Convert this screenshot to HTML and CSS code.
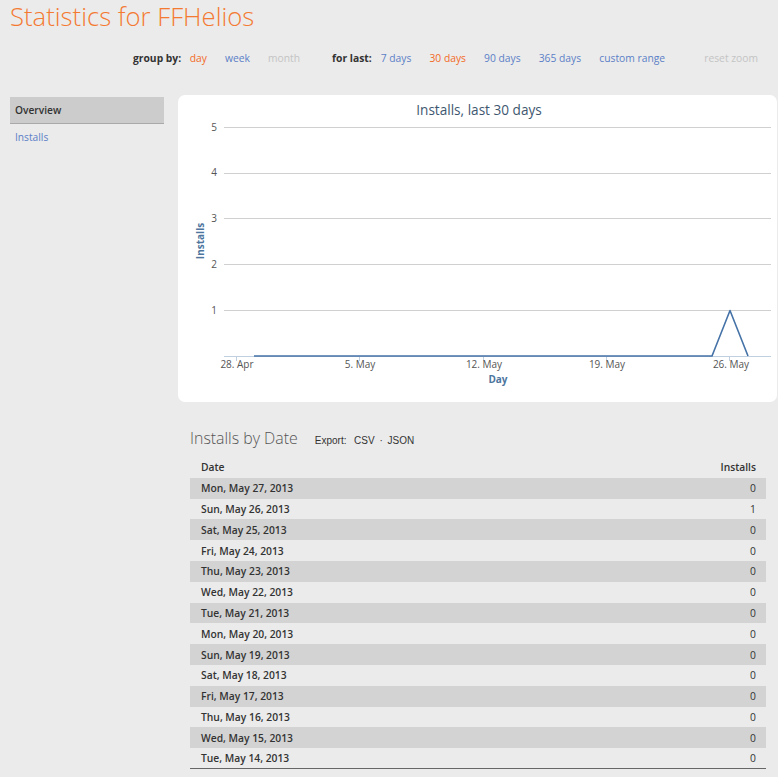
FILE: index.html
```html
<!DOCTYPE html>
<html>
<head>
<meta charset="utf-8">
<title>Statistics for FFHelios</title>
<link rel="stylesheet" href="styles.css">
</head>
<body>
<h1 class="page-title">Statistics for FFHelios</h1>
<div class="controls">
  <span class="label">group by:</span>
  <a class="opt active">day</a>
  <a class="opt">week</a>
  <a class="opt disabled">month</a>
  <span class="label second">for last:</span>
  <a class="opt">7 days</a>
  <a class="opt active">30 days</a>
  <a class="opt">90 days</a>
  <a class="opt">365 days</a>
  <a class="opt">custom range</a>
  <a class="opt disabled reset">reset zoom</a>
</div>
<div class="layout">
  <aside class="sidebar">
    <div class="side-head">Overview</div>
    <a class="side-link">Installs</a>
  </aside>
  <main class="main">
    <div class="card">
      <svg class="chart" width="599" height="307" viewBox="0 0 599 307">
        <text class="c-title" x="301" y="20" text-anchor="middle">Installs, last 30 days</text>
        <g class="grid">
          <line x1="46" x2="593" y1="32.5" y2="32.5"/>
          <line x1="46" x2="593" y1="78.5" y2="78.5"/>
          <line x1="46" x2="593" y1="123.5" y2="123.5"/>
          <line x1="46" x2="593" y1="169.5" y2="169.5"/>
          <line x1="46" x2="593" y1="215.5" y2="215.5"/>
        </g>
        <g class="ylab">
          <text x="39" y="36">5</text>
          <text x="39" y="81">4</text>
          <text x="39" y="127">3</text>
          <text x="39" y="173">2</text>
          <text x="39" y="219">1</text>
        </g>
        <line class="xaxis" x1="46" x2="593" y1="261.5" y2="261.5"/>
        <g class="ticks">
          <line x1="58.5" x2="58.5" y1="261" y2="266"/>
          <line x1="181.5" x2="181.5" y1="261" y2="266"/>
          <line x1="305.5" x2="305.5" y1="261" y2="266"/>
          <line x1="428.5" x2="428.5" y1="261" y2="266"/>
          <line x1="551.5" x2="551.5" y1="261" y2="266"/>
        </g>
        <g class="xlab">
          <text x="59" y="273">28. Apr</text>
          <text x="182" y="273">5. May</text>
          <text x="306" y="273">12. May</text>
          <text x="429" y="273">19. May</text>
          <text x="553" y="273">26. May</text>
        </g>
        <polyline class="series" points="76,261 534,261 552,215.5 570,261"/>
        <text class="axis-title" transform="translate(26,146) rotate(-90)" text-anchor="middle">Installs</text>
        <text class="axis-title" x="320" y="288" text-anchor="middle">Day</text>
      </svg>
    </div>
    <section class="by-date">
      <div class="sec-head">
        <h2>Installs by Date</h2>
        <span class="export">Export:&nbsp; <a>CSV</a> &middot; <a>JSON</a></span>
      </div>
      <table class="data">
        <thead>
          <tr><th class="c-date">Date</th><th class="c-num">Installs</th></tr>
        </thead>
        <tbody>
          <tr><td class="c-date">Mon, May 27, 2013</td><td class="c-num">0</td></tr>
          <tr><td class="c-date">Sun, May 26, 2013</td><td class="c-num">1</td></tr>
          <tr><td class="c-date">Sat, May 25, 2013</td><td class="c-num">0</td></tr>
          <tr><td class="c-date">Fri, May 24, 2013</td><td class="c-num">0</td></tr>
          <tr><td class="c-date">Thu, May 23, 2013</td><td class="c-num">0</td></tr>
          <tr><td class="c-date">Wed, May 22, 2013</td><td class="c-num">0</td></tr>
          <tr><td class="c-date">Tue, May 21, 2013</td><td class="c-num">0</td></tr>
          <tr><td class="c-date">Mon, May 20, 2013</td><td class="c-num">0</td></tr>
          <tr><td class="c-date">Sun, May 19, 2013</td><td class="c-num">0</td></tr>
          <tr><td class="c-date">Sat, May 18, 2013</td><td class="c-num">0</td></tr>
          <tr><td class="c-date">Fri, May 17, 2013</td><td class="c-num">0</td></tr>
          <tr><td class="c-date">Thu, May 16, 2013</td><td class="c-num">0</td></tr>
          <tr><td class="c-date">Wed, May 15, 2013</td><td class="c-num">0</td></tr>
          <tr><td class="c-date">Tue, May 14, 2013</td><td class="c-num">0</td></tr>
        </tbody>
      </table>
    </section>
  </main>
</div>
</body>
</html>
```

FILE: styles.css
```css
html, body {
  margin: 0;
  padding: 0;
}
body {
  background: #ebebeb;
  font-family: "Open Sans", "DejaVu Sans", sans-serif;
  color: #333;
  height: 777px;
  overflow: hidden;
}
.page-title {
  margin: 0;
  padding-left: 10px;
  font-size: 25.7px;
  line-height: 34px;
  font-weight: 300;
  color: #f47a32;
}
.controls {
  margin-top: 16px;
  padding-left: 133px;
  font-size: 10.3px;
  line-height: 16px;
  display: flex;
  white-space: nowrap;
}
.controls .label {
  font-weight: 700;
  color: #333;
  margin-right: 8.5px;
}
.controls .label.second {
  margin-left: 14px;
  margin-right: 9px;
}
.controls .opt {
  color: #5b7fc7;
  margin-right: 18.1px;
}
.controls .opt.active {
  color: #f26a1f;
}
.controls .opt.disabled {
  color: #c4c4c4;
}
.controls .opt.reset {
  margin-left: 21px;
}
.layout {
  display: flex;
  margin-top: 29px;
  padding-left: 10px;
  gap: 14px;
}
.sidebar {
  width: 154px;
  flex: none;
  padding-top: 2px;
}
.side-head {
  background: #cccccc;
  border-bottom: 1px solid #a9a9a9;
  height: 26px;
  line-height: 26px;
  padding-left: 5px;
  font-size: 10.2px;
  font-weight: 600;
  color: #333;
}
.side-link {
  display: block;
  padding-left: 5px;
  margin-top: 6px;
  font-size: 10.2px;
  line-height: 15px;
  color: #5b7fc7;
}
.main {
  width: 599px;
  flex: none;
}
.card {
  background: #fff;
  border-radius: 7px;
  height: 307px;
}
.chart {
  display: block;
  font-family: "Open Sans", "DejaVu Sans", sans-serif;
}
.c-title {
  font-size: 13.6px;
  fill: #3e576f;
}
.grid line {
  stroke: #d0d0d0;
  stroke-width: 1;
}
.ylab text {
  font-size: 10px;
  fill: #555;
  text-anchor: end;
}
.xaxis {
  stroke: #c0d0e0;
  stroke-width: 1;
}
.ticks line {
  stroke: #c0d0e0;
  stroke-width: 1;
}
.xlab text {
  font-size: 10px;
  fill: #555;
  text-anchor: middle;
}
.series {
  fill: none;
  stroke: #4572a7;
  stroke-width: 1.6;
  stroke-linejoin: round;
}
.axis-title {
  font-size: 10px;
  font-weight: 700;
  fill: #4d759e;
}
.by-date {
  padding: 0 11px 0 12px;
}
.sec-head {
  display: flex;
  align-items: baseline;
  margin-top: 24px;
  gap: 17px;
}
.sec-head h2 {
  margin: 0;
  font-size: 15.9px;
  line-height: 24px;
  font-weight: 300;
  color: #555;
}
.export {
  font-family: "Liberation Sans", Arial, sans-serif;
  font-size: 10px;
  color: #333;
}
.export a {
  margin: 0 2px;
}
.data {
  width: 100%;
  margin-top: 7px;
  border-collapse: collapse;
  font-size: 10.3px;
  border-bottom: 1px solid #666;
}
.data th, .data td {
  height: 20.8px;
  padding: 0 10px 0 11px;
  line-height: 14px;
  box-sizing: border-box;
}
.data th {
  font-weight: 600;
  color: #333;
}
.data td.c-date {
  font-weight: 600;
  color: #333;
}
.data td.c-num {
  color: #333;
}
.c-date {
  text-align: left;
}
.c-num {
  text-align: right;
}
.data tbody tr:nth-child(odd) {
  background: #d3d3d3;
}
```
